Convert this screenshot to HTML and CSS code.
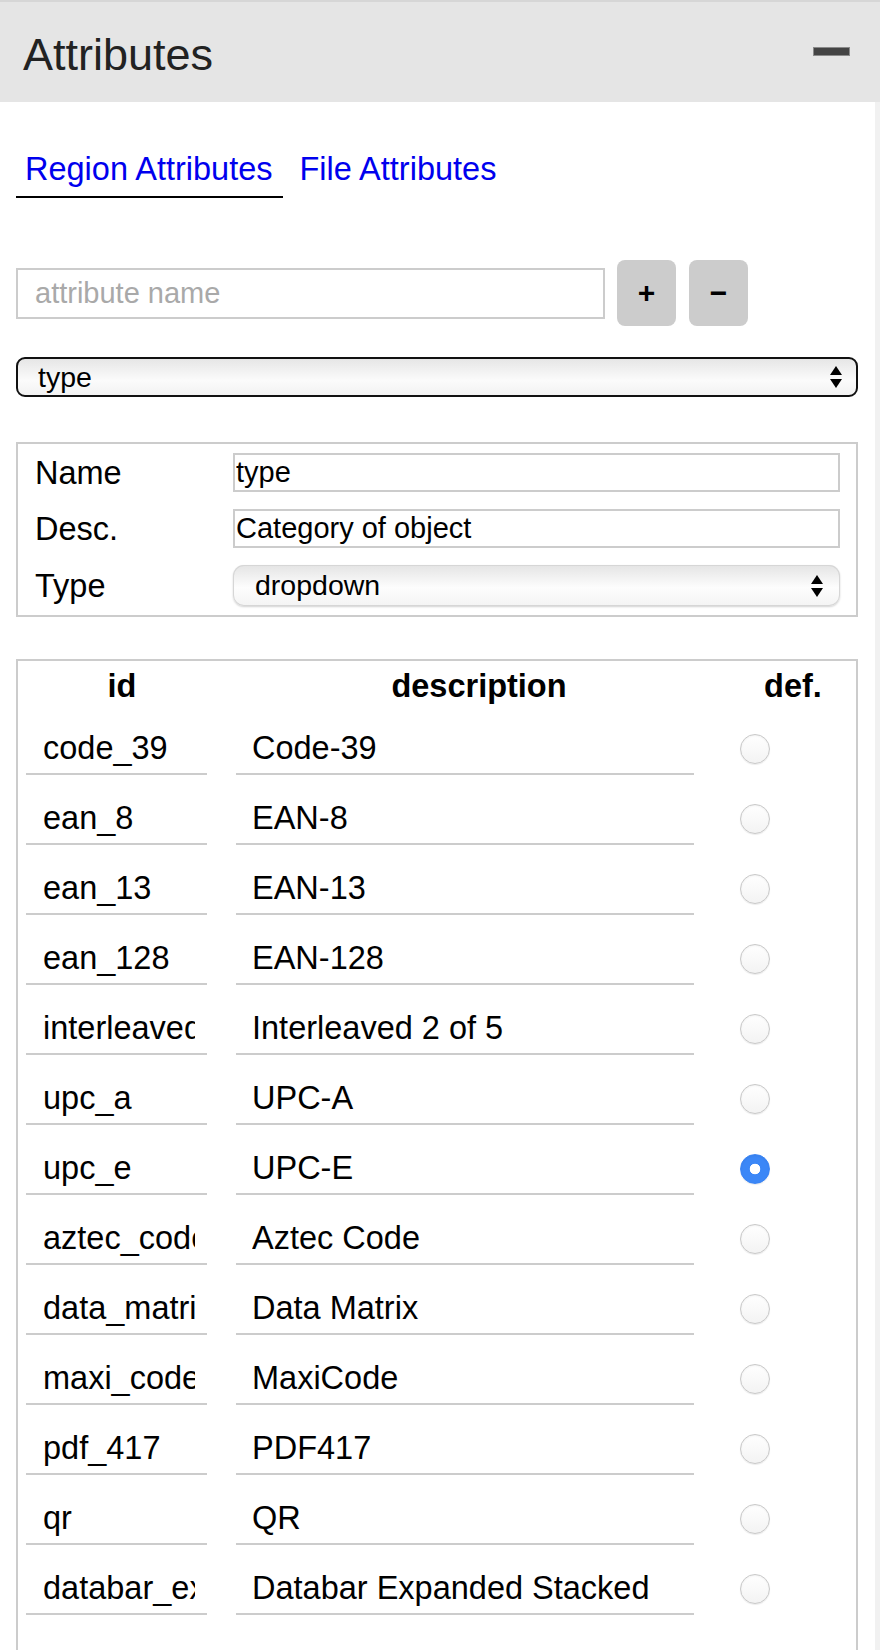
FILE: index.html
```html
<!DOCTYPE html>
<html lang="en">
<head>
<meta charset="utf-8">
<title>Attributes</title>
<link rel="stylesheet" href="styles.css">
</head>
<body>
<div class="page">
  <header class="panel-head">
    <h1 class="title">Attributes</h1>
    <span class="collapse" aria-label="collapse"></span>
  </header>
  <div class="panel-body">
    <main class="content">
      <nav class="tabs">
        <a class="tab active" href="#">Region Attributes</a>
        <a class="tab" href="#">File Attributes</a>
      </nav>

      <div class="add-row">
        <input class="attr-name" type="text" placeholder="attribute name">
        <button class="btn">+</button>
        <button class="btn btn-minus">&minus;</button>
      </div>

      <div class="select select-main">
        <span>type</span>
        <svg class="arrows" width="12" height="22" viewBox="0 0 12 22"><polygon points="0,9 6,0 12,9"/><polygon points="0,13 12,13 6,22"/></svg>
      </div>

      <div class="props">
        <label class="prop-label">Name</label>
        <input class="prop-input" type="text" value="type">
        <label class="prop-label">Desc.</label>
        <input class="prop-input" type="text" value="Category of object">
        <label class="prop-label">Type</label>
        <div class="select select-soft">
          <span>dropdown</span>
          <svg class="arrows" width="12" height="22" viewBox="0 0 12 22"><polygon points="0,9 6,0 12,9"/><polygon points="0,13 12,13 6,22"/></svg>
        </div>
      </div>

      <div class="options">
        <div class="opt-head">
          <span class="h-id">id</span>
          <span class="h-desc">description</span>
          <span class="h-def">def.</span>
        </div>
        <div class="opt-rows">
          <div class="opt-row"><input class="cell-id" value="code_39"><input class="cell-desc" value="Code-39"><input class="radio" type="radio" name="def"></div>
          <div class="opt-row"><input class="cell-id" value="ean_8"><input class="cell-desc" value="EAN-8"><input class="radio" type="radio" name="def"></div>
          <div class="opt-row"><input class="cell-id" value="ean_13"><input class="cell-desc" value="EAN-13"><input class="radio" type="radio" name="def"></div>
          <div class="opt-row"><input class="cell-id" value="ean_128"><input class="cell-desc" value="EAN-128"><input class="radio" type="radio" name="def"></div>
          <div class="opt-row"><input class="cell-id" value="interleaved_2_of_5"><input class="cell-desc" value="Interleaved 2 of 5"><input class="radio" type="radio" name="def"></div>
          <div class="opt-row"><input class="cell-id" value="upc_a"><input class="cell-desc" value="UPC-A"><input class="radio" type="radio" name="def"></div>
          <div class="opt-row"><input class="cell-id" value="upc_e"><input class="cell-desc" value="UPC-E"><input class="radio" type="radio" name="def" checked></div>
          <div class="opt-row"><input class="cell-id" value="aztec_code"><input class="cell-desc" value="Aztec Code"><input class="radio" type="radio" name="def"></div>
          <div class="opt-row"><input class="cell-id" value="data_matrix"><input class="cell-desc" value="Data Matrix"><input class="radio" type="radio" name="def"></div>
          <div class="opt-row"><input class="cell-id" value="maxi_code"><input class="cell-desc" value="MaxiCode"><input class="radio" type="radio" name="def"></div>
          <div class="opt-row"><input class="cell-id" value="pdf_417"><input class="cell-desc" value="PDF417"><input class="radio" type="radio" name="def"></div>
          <div class="opt-row"><input class="cell-id" value="qr"><input class="cell-desc" value="QR"><input class="radio" type="radio" name="def"></div>
          <div class="opt-row"><input class="cell-id" value="databar_expanded_stacked"><input class="cell-desc" value="Databar Expanded Stacked"><input class="radio" type="radio" name="def"></div>
        </div>
      </div>
    </main>
    <div class="strip"></div>
  </div>
</div>
</body>
</html>
```

FILE: styles.css
```css
* { box-sizing: border-box; }

html, body {
  margin: 0;
  padding: 0;
  overflow: hidden;
  background: #fff;
}

.page {
  width: 880px;
  height: 1650px;
  overflow: hidden;
  font-family: "Liberation Sans", Arial, Helvetica, sans-serif;
  color: #000;
}

.panel-head {
  display: flex;
  align-items: center;
  justify-content: space-between;
  height: 102px;
  padding: 4px 31px 0 23px;
  background: #e5e5e5;
  border-top: 2px solid #d6d6d6;
}

.title {
  margin: 0;
  font-size: 45px;
  font-weight: normal;
  line-height: 1;
  color: #222;
}

.collapse {
  display: block;
  width: 35px;
  height: 7px;
  margin-bottom: 5px;
  background: #444;
  box-shadow: 0 0 0 1px #8a8a8a;
}

.panel-body {
  display: flex;
  height: 1548px;
}

.content {
  flex: 1;
  padding: 49px 17px 0 16px;
}

.strip {
  width: 5px;
  background: #f1f1f1;
}

.tabs {
  display: flex;
  gap: 8px;
}

.tab {
  font-size: 32.5px;
  line-height: 36px;
  color: #0000ee;
  text-decoration: none;
  padding: 0 10px 9px 9px;
  border-bottom: 2px solid transparent;
}

.tab.active {
  border-bottom-color: #000;
}

.add-row {
  display: flex;
  align-items: center;
  gap: 12px;
  margin-top: 62px;
}

.attr-name {
  width: 589px;
  height: 51px;
  border: 2px solid #cccccc;
  padding: 0 0 0 17px;
  font-family: inherit;
  font-size: 29px;
  color: #000;
  outline: none;
}

.attr-name::placeholder {
  color: #a9a9a9;
}

.btn {
  width: 59px;
  height: 66px;
  border: none;
  border-radius: 8px;
  background: #cccccc;
  padding: 0;
  font-family: inherit;
  font-size: 30px;
  font-weight: bold;
  line-height: 1;
  color: #000;
}

.btn-minus {
  margin-left: 1px;
}

.select {
  display: flex;
  align-items: center;
  justify-content: space-between;
  font-size: 28.5px;
  color: #000;
}

.arrows {
  fill: #000;
  flex: none;
}

.select-main {
  margin-top: 31px;
  height: 40px;
  border: 2px solid #111;
  border-radius: 9px;
  padding: 0 14px 0 20px;
  background: linear-gradient(#e6e6e6, #fbfbfb 60%, #f2f2f2);
}

.props {
  display: grid;
  grid-template-columns: 198px 607px;
  row-gap: 17px;
  align-items: center;
  margin-top: 45px;
  border: 2px solid #cccccc;
  padding: 9px 16px 9px 17px;
}

.prop-label {
  font-size: 32.5px;
  line-height: 36px;
}

.prop-input {
  height: 39px;
  border: 2px solid #cccccc;
  padding: 0 1px;
  font-family: inherit;
  font-size: 29px;
  color: #000;
  outline: none;
}

.select-soft {
  height: 41px;
  border-radius: 11px;
  padding: 0 17px 0 22px;
  background: linear-gradient(#e4e4e4, #fdfdfd 55%, #f4f4f4);
  box-shadow: inset 0 0 0 1px #d6d6d6, 0 1px 2px rgba(0, 0, 0, 0.18);
}

.options {
  margin-top: 42px;
  border: 2px solid #cccccc;
  padding: 5px 0 80px 8px;
}

.opt-head {
  display: flex;
  font-size: 32.5px;
  line-height: 40px;
  font-weight: bold;
  margin-bottom: 17px;
}

.h-id {
  width: 192px;
  text-align: center;
}

.h-desc {
  width: 486px;
  margin-left: 18px;
  text-align: center;
}

.h-def {
  width: 126px;
  margin-left: 8px;
  text-align: center;
}

.opt-rows {
  display: flex;
  flex-direction: column;
  gap: 18px;
}

.opt-row {
  display: flex;
  align-items: center;
}

.cell-id,
.cell-desc {
  height: 52px;
  border: none;
  border-bottom: 2px solid #cccccc;
  font-family: inherit;
  font-size: 32.5px;
  color: #000;
  outline: none;
  background: transparent;
}

.cell-id {
  width: 181px;
  padding: 0 12px 0 17px;
}

.cell-desc {
  width: 458px;
  margin-left: 29px;
  padding: 0 8px 0 16px;
}

.radio {
  appearance: none;
  -webkit-appearance: none;
  width: 30px;
  height: 30px;
  margin: 0 0 0 46px;
  border-radius: 50%;
  border: 1px solid #c8c8c8;
  background: linear-gradient(#ffffff, #f3f3f3);
  box-shadow: inset 0 1px 2px rgba(0, 0, 0, 0.06), 0 1px 1px rgba(0, 0, 0, 0.08);
}

.radio:checked {
  border-color: #3a84f3;
  background: radial-gradient(circle, #ffffff 0 5px, #3b87f7 5.6px);
}
```
